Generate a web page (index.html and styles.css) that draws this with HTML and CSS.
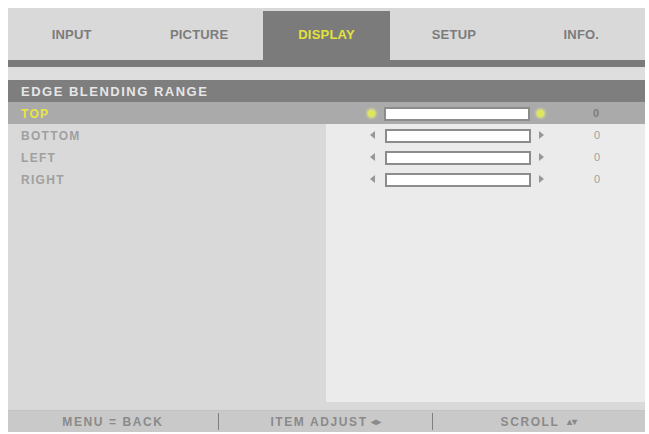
FILE: index.html
```html
<!DOCTYPE html>
<html>
<head>
<meta charset="utf-8">
<link rel="stylesheet" href="styles.css">
</head>
<body>
<div class="screen">
  <div class="tabs">
    <div class="tab">INPUT</div>
    <div class="tab">PICTURE</div>
    <div class="tab active">DISPLAY</div>
    <div class="tab">SETUP</div>
    <div class="tab">INFO.</div>
  </div>
  <div class="strip"></div>
  <div class="gap"></div>
  <div class="header">EDGE BLENDING RANGE</div>
  <div class="list">
    <div class="row selected">
      <div class="label">TOP</div>
      <div class="ctrl">
        <span class="dot"></span>
        <span class="bar"></span>
        <span class="dot"></span>
        <span class="value">0</span>
      </div>
    </div>
    <div class="row">
      <div class="label">BOTTOM</div>
      <div class="ctrl">
        <span class="arrow left"></span>
        <span class="bar"></span>
        <span class="arrow right"></span>
        <span class="value">0</span>
      </div>
    </div>
    <div class="row">
      <div class="label">LEFT</div>
      <div class="ctrl">
        <span class="arrow left"></span>
        <span class="bar"></span>
        <span class="arrow right"></span>
        <span class="value">0</span>
      </div>
    </div>
    <div class="row">
      <div class="label">RIGHT</div>
      <div class="ctrl">
        <span class="arrow left"></span>
        <span class="bar"></span>
        <span class="arrow right"></span>
        <span class="value">0</span>
      </div>
    </div>
    <div class="row filler">
      <div class="label"></div>
      <div class="ctrl"></div>
    </div>
  </div>
  <div class="gap2"></div>
  <div class="footer">
    <div class="fcell">MENU = BACK</div>
    <div class="fcell sep">ITEM ADJUST <span class="lr">◂▸</span></div>
    <div class="fcell sep">SCROLL <span class="ud">▴▾</span></div>
  </div>
</div>
</body>
</html>
```

FILE: styles.css
```css
html, body {
  margin: 0;
  padding: 0;
  background: #ffffff;
}
body {
  font-family: "Liberation Sans", Arial, sans-serif;
  font-weight: bold;
}
.screen {
  margin: 8px 0 0 8px;
  width: 637px;
  height: 424px;
  background: #d9d9d9;
  display: flex;
  flex-direction: column;
}
.tabs {
  height: 52px;
  display: flex;
  background: #d9d9d9;
}
.tab {
  flex: 1;
  display: flex;
  align-items: center;
  justify-content: center;
  font-size: 13px;
  color: #7c7c7c;
  letter-spacing: 0.2px;
}
.tab.active {
  margin-top: 3px;
  background: #7b7b7b;
  color: #e4e23a;
  padding-bottom: 3px;
}
.strip {
  height: 7px;
  background: #7b7b7b;
}
.gap {
  height: 13px;
  background: #dedede;
}
.header {
  height: 22px;
  background: #7e7e7e;
  color: #e6e6e6;
  font-size: 13px;
  letter-spacing: 1.5px;
  padding-left: 13px;
  display: flex;
  align-items: center;
}
.list {
  display: flex;
  flex-direction: column;
  flex: 1;
}
.row {
  height: 22px;
  display: grid;
  grid-template-columns: 318px 1fr;
}
.row.filler {
  flex: 1;
}
.label {
  display: flex;
  align-items: center;
  padding-left: 13px;
  padding-top: 1px;
  font-size: 12px;
  letter-spacing: 1.3px;
  color: #a0a0a0;
}
.ctrl {
  background: #ebebeb;
  display: flex;
  align-items: center;
  padding-left: 42px;
}
.row.selected {
  background: #aaaaaa;
}
.row.selected .ctrl {
  background: transparent;
}
.row.selected .label {
  color: #e8e640;
}
.bar {
  width: 142px;
  height: 10px;
  background: #ffffff;
  border: 2px solid #8c8c8c;
  margin-left: 9px;
  margin-top: 1px;
}
.dot, .arrow {
  width: 8px;
  height: 8px;
  display: inline-flex;
  align-items: center;
  justify-content: center;
}
.dot {
  border-radius: 50%;
  background: #dce85a;
  box-shadow: 0 0 3px 1px #e6ee80;
  width: 7px;
  height: 7px;
}
.dot + .bar + .dot {
  margin-left: 7px;
}
.arrow.right {
  margin-left: 6px;
}
.arrow::before {
  content: "";
  width: 0;
  height: 0;
  border-top: 4px solid transparent;
  border-bottom: 4px solid transparent;
}
.arrow.left::before {
  border-right: 5px solid #979797;
}
.arrow.right::before {
  border-left: 5px solid #979797;
}
.value {
  width: 24px;
  margin-left: 40px;
  text-align: center;
  font-size: 11px;
  font-weight: normal;
  color: #a2a2a2;
}
.row.selected .value {
  color: #7c7c7c;
  font-weight: bold;
}
.gap2 {
  height: 8px;
}
.footer {
  height: 21px;
  background: #c9c9c9;
  display: grid;
  grid-template-columns: 210px 214px 1fr;
  border-top: 1px solid #c4c4c4;
}
.fcell {
  display: flex;
  align-items: center;
  justify-content: center;
  font-size: 12px;
  letter-spacing: 1.6px;
  color: #8a8a8a;
}
.fcell.sep {
  border-left: 1.5px solid #7f7f7f;
  border-image: linear-gradient(#c9c9c9 15%, #7f7f7f 15%, #7f7f7f 85%, #c9c9c9 85%) 1;
}
.lr, .ud {
  font-size: 10px;
  letter-spacing: 0;
  margin-left: 3px;
}
.ud {
  margin-left: 8px;
}
```
